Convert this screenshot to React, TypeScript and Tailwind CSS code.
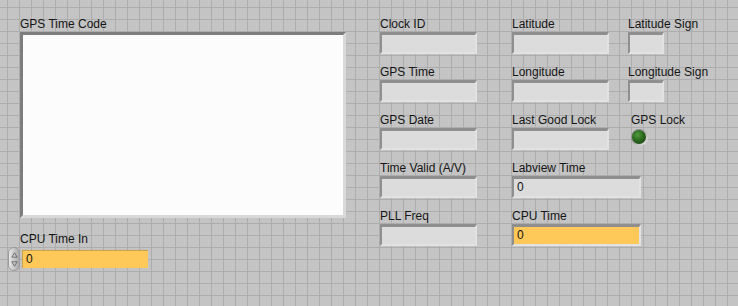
import React from 'react';

const font = { fontFamily: '"Liberation Sans", Arial, sans-serif' };

type FieldProps = { w: string; value?: string; yellow?: boolean };

const Field: React.FC<FieldProps> = ({ w, value, yellow }) => (
  <div
    className={`${w} h-[22px] border-t-[3px] border-l-[2px] border-r-[2px] border-b-[2px] border-t-[#8f8f8f] border-l-[#8f8f8f] border-r-[#e2e2e2] border-b-[#e2e2e2] ${
      yellow ? 'bg-[#ffc95a]' : 'bg-[#dcdcdc]'
    } text-[12px] leading-[17px] pl-[3px] text-[#111]`}
  >
    {value}
  </div>
);

const Item: React.FC<{ label: string; children: React.ReactNode }> = ({ label, children }) => (
  <div className="h-[48px]">
    <div className="h-[16px] text-[12px] leading-[16px] text-[#151515] whitespace-nowrap">{label}</div>
    {children}
  </div>
);

const Spinner = () => (
  <div className="w-[12px] h-[24px] rounded-[6px] bg-gradient-to-r from-[#e8e8e8] to-[#a9a9a9] border border-[#9a9a9a] flex flex-col items-center justify-center gap-[3px]">
    <svg width="7" height="6" viewBox="0 0 7 6">
      <path d="M3.5 0.8 L6.2 5.2 L0.8 5.2 Z" fill="none" stroke="#6a6a6a" strokeWidth="0.9" />
    </svg>
    <svg width="7" height="6" viewBox="0 0 7 6">
      <path d="M3.5 5.2 L6.2 0.8 L0.8 0.8 Z" fill="none" stroke="#6a6a6a" strokeWidth="0.9" />
    </svg>
  </div>
);

const Led = () => (
  <div className="w-[17px] h-[17px] rounded-full bg-[#e8e8e8] p-[1px] pr-[2px] pb-[2px] bg-gradient-to-br from-[#6d6d6d] to-[#f2f2f2]">
    <div className="w-full h-full rounded-full bg-[radial-gradient(circle_at_40%_35%,#4f9a3c_0%,#2c6a1f_45%,#173a10_100%)]" />
  </div>
);

export default function App() {
  return (
    <div
      style={font}
      className="w-[738px] h-[306px] bg-[#c4c4c4] bg-[linear-gradient(to_right,#adadad_1px,transparent_1px),linear-gradient(to_bottom,#adadad_1px,transparent_1px)] bg-[size:12px_12px] bg-[position:7px_7px] flex pl-[8px] pt-[16px] overflow-hidden"
    >
      {/* left column */}
      <div className="w-[372px] flex flex-col">
        <div className="ml-[12px] h-[16px] text-[12px] leading-[16px] text-[#151515]">GPS Time Code</div>
        <div className="ml-[12px] w-[326px] h-[186px] border-t-[3px] border-l-[3px] border-r-[3px] border-b-[3px] border-t-[#7d7d7d] border-l-[#7d7d7d] border-r-[#d9d9d9] border-b-[#d9d9d9] bg-[#fcfcfc]" />
        <div className="ml-[12px] mt-[13px] h-[16px] text-[12px] leading-[16px] text-[#151515]">CPU Time In</div>
        <div className="flex items-center gap-[2px] h-[24px]">
          <Spinner />
          <div className="w-[126px] h-[18px] bg-[#ffc95a] border-t border-l border-[#c9a14a] text-[12px] leading-[17px] pl-[3px] text-[#111]">0</div>
        </div>
      </div>

      {/* column 2 */}
      <div className="w-[132px] flex flex-col">
        <Item label="Clock ID"><Field w="w-[97px]" /></Item>
        <Item label="GPS Time"><Field w="w-[97px]" /></Item>
        <Item label="GPS Date"><Field w="w-[97px]" /></Item>
        <Item label="Time Valid (A/V)"><Field w="w-[97px]" /></Item>
        <Item label="PLL Freq"><Field w="w-[97px]" /></Item>
      </div>

      {/* column 3 */}
      <div className="w-[116px] flex flex-col">
        <Item label="Latitude"><Field w="w-[97px]" /></Item>
        <Item label="Longitude"><Field w="w-[97px]" /></Item>
        <Item label="Last Good Lock"><Field w="w-[97px]" /></Item>
        <Item label="Labview Time"><Field w="w-[129px]" value="0" /></Item>
        <Item label="CPU Time"><Field w="w-[129px]" value="0" yellow /></Item>
      </div>

      {/* column 4 */}
      <div className="w-[100px] flex flex-col">
        <Item label="Latitude Sign"><Field w="w-[36px]" /></Item>
        <Item label="Longitude Sign"><Field w="w-[36px]" /></Item>
        <div className="h-[48px] pl-[3px]">
          <div className="h-[16px] text-[12px] leading-[16px] text-[#151515]">GPS Lock</div>
          <div className="mt-[1px]">
            <Led />
          </div>
        </div>
      </div>
    </div>
  );
}
